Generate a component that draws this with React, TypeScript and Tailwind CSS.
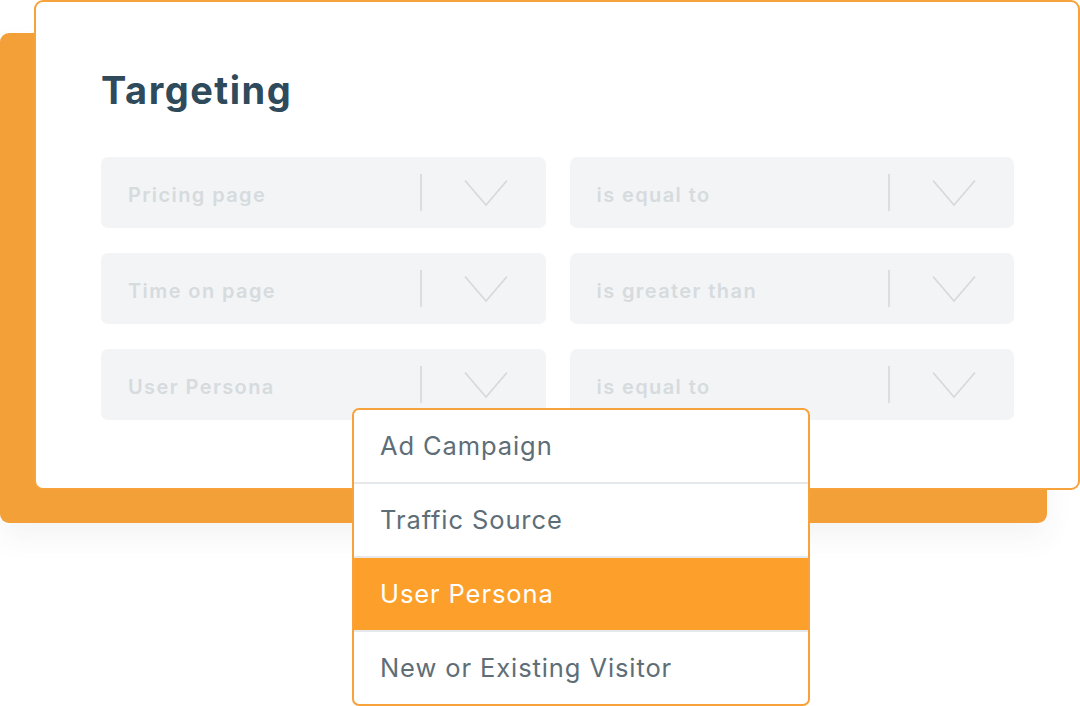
import React from "react";

const Chevron = () => (
  <svg width="44" height="28" viewBox="0 0 44 28" fill="none">
    <path d="M1 1.5 L22 26 L43 1.5" stroke="#d3d9dc" strokeWidth="1.6" strokeLinejoin="miter" />
  </svg>
);

const Field = ({ label }: { label: string }) => (
  <div className="flex h-[71px] items-center rounded-[7px] bg-[#f3f4f6] pl-[27px] pr-[38px]">
    <span className="flex-1 pt-[4px] text-[20px] font-semibold tracking-[1.4px] text-[#d6dbde]">{label}</span>
    <div className="h-[37px] w-[2px] bg-[#d9dfe1]" />
    <div className="ml-[42px] flex h-[28px] w-[44px] items-center">
      <Chevron />
    </div>
  </div>
);

const items = ["Ad Campaign", "Traffic Source", "User Persona", "New or Existing Visitor"];

export default function App() {
  return (
    <div
      className="relative h-[706px] w-[1080px] overflow-hidden bg-white"
      style={{ fontFamily: "Inter, 'Noto Sans', sans-serif" }}
    >
      {/* back orange panel */}
      <div className="absolute left-0 top-[33px] h-[490px] w-[1047px] rounded-[9px] bg-[#f3a038] shadow-[0_14px_30px_rgba(60,70,80,0.06)]" />

      {/* card */}
      <div className="absolute left-[34px] top-0 h-[490px] w-[1046px] rounded-[9px] border-2 border-[#f7a23a] bg-white pl-[65px] pr-[63px] pt-[69px]">
        <h1 className="text-[38px] font-bold leading-none tracking-[1.5px] text-[#2e4a5b]">Targeting</h1>
        <div className="mt-[48px] grid grid-cols-2 gap-x-[24px] gap-y-[25px] w-[913px]">
          <Field label="Pricing page" />
          <Field label="is equal to" />
          <Field label="Time on page" />
          <Field label="is greater than" />
          <Field label="User Persona" />
          <Field label="is equal to" />
        </div>
      </div>

      {/* dropdown menu */}
      <div className="absolute left-[352px] top-[408px] w-[458px] overflow-hidden rounded-[7px] border-2 border-[#f7a23a] bg-white">
        {items.map((it, i) => (
          <div
            key={it}
            className={
              (i > 0 ? "h-[74px] border-t-2 border-[#e6e9eb] " : "h-[72px] ") +
              (i === 2 ? "bg-[#fd9f2b] text-white " : "text-[#5e6e77] ") +
              "flex items-center pl-[26px] text-[25.5px] tracking-[0.9px]"
            }
          >
            {it}
          </div>
        ))}
      </div>
    </div>
  );
}
